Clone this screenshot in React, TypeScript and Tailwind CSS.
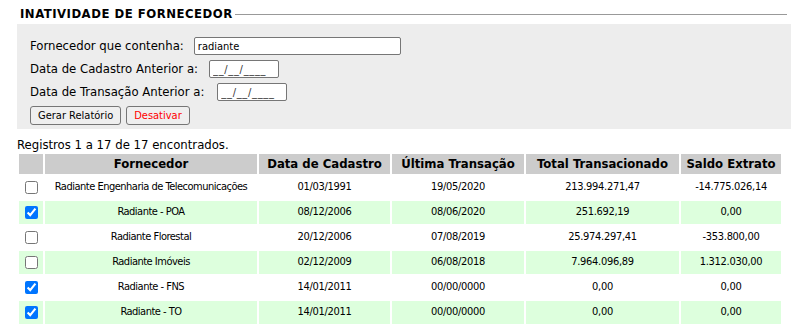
import React from "react";

interface Linha {
  id: number;
  marcado: boolean;
  nome: string;
  cadastro: string;
  ultima: string;
  total: string;
  saldo: string;
}

const linhas: Linha[] = [
  { id: 1, marcado: false, nome: "Radiante Engenharia de Telecomunicações", cadastro: "01/03/1991", ultima: "19/05/2020", total: "213.994.271,47", saldo: "-14.775.026,14" },
  { id: 2, marcado: true, nome: "Radiante - POA", cadastro: "08/12/2006", ultima: "08/06/2020", total: "251.692,19", saldo: "0,00" },
  { id: 3, marcado: false, nome: "Radiante Florestal", cadastro: "20/12/2006", ultima: "07/08/2019", total: "25.974.297,41", saldo: "-353.800,00" },
  { id: 4, marcado: false, nome: "Radiante Imóveis", cadastro: "02/12/2009", ultima: "06/08/2018", total: "7.964.096,89", saldo: "1.312.030,00" },
  { id: 5, marcado: true, nome: "Radiante - FNS", cadastro: "14/01/2011", ultima: "00/00/0000", total: "0,00", saldo: "0,00" },
  { id: 6, marcado: true, nome: "Radiante - TO", cadastro: "14/01/2011", ultima: "00/00/0000", total: "0,00", saldo: "0,00" },
];

const fonte = "font-['DejaVu_Sans_Condensed','DejaVu_Sans',sans-serif]";

const CampoData = () => (
  <input
    type="text"
    defaultValue="__/__/____"
    className="h-[18px] w-[70px] rounded-[2px] border border-[#767676] bg-white px-[3px] text-[11px] tracking-[0.7px] text-[#333] outline-none"
  />
);

export default function App() {
  return (
    <div className={`w-[808px] bg-white px-[17px] pt-[6px] text-black ${fonte}`}>
      {/* titulo */}
      <div className="flex w-[770px] items-center gap-[2px] pl-[3px]">
        <span className="text-[13px] font-bold leading-[16px] tracking-[0.5px]">INATIVIDADE DE FORNECEDOR</span>
        <div className="h-px flex-1 bg-[#999]" />
      </div>

      {/* filtros */}
      <div className="mt-[2px] flex flex-col gap-[5px] bg-[#ededed] pb-[4px] pl-[13px] pt-[13px] text-[13px]">
        <div className="flex h-[18px] items-center gap-[10px]">
          <span>Fornecedor que contenha:</span>
          <input
            type="text"
            defaultValue="radiante"
            className="h-[18px] w-[207px] rounded-[2px] border border-[#767676] bg-white px-[3px] text-[11px] outline-none"
          />
        </div>
        <div className="flex h-[18px] items-center gap-[11px]">
          <span>Data de Cadastro Anterior a:</span>
          <CampoData />
        </div>
        <div className="flex h-[18px] items-center gap-[13px]">
          <span>Data de Transação Anterior a:</span>
          <CampoData />
        </div>
        <div className="flex gap-[5px]">
          <button className="h-[19px] rounded-[3px] border border-[#767676] bg-[#efefef] px-[7px] text-[11px] leading-none">
            Gerar Relatório
          </button>
          <button className="h-[19px] rounded-[3px] border border-[#767676] bg-[#efefef] px-[7px] text-[11px] leading-none text-[#ff0000]">
            Desativar
          </button>
        </div>
      </div>

      <p className="mt-[8px] text-[13px] leading-[15px]">Registros 1 a 17 de 17 encontrados.</p>

      <table className="w-[766px] table-fixed border-separate border-spacing-[2px]">
        <colgroup>
          <col className="w-[24px]" />
          <col className="w-[212px]" />
          <col className="w-[131px]" />
          <col className="w-[132px]" />
          <col className="w-[153px]" />
          <col className="w-[100px]" />
        </colgroup>
        <thead>
          <tr className="h-[20px] bg-[#cccccc] text-[13px] font-bold">
            <th></th>
            <th>Fornecedor</th>
            <th>Data de Cadastro</th>
            <th>Última Transação</th>
            <th>Total Transacionado</th>
            <th>Saldo Extrato</th>
          </tr>
        </thead>
        <tbody>
          {linhas.map((l, i) => (
            <tr
              key={l.id}
              className={`h-[23px] text-center text-[11px] tracking-[-0.3px] ${i % 2 === 1 ? "bg-[#ddffdd]" : "bg-white"}`}
            >
              <td className="p-0">
                <input type="checkbox" defaultChecked={l.marcado} className="m-0 h-[13px] w-[13px] align-middle" />
              </td>
              <td className="tracking-[-0.5px]">{l.nome}</td>
              <td>{l.cadastro}</td>
              <td>{l.ultima}</td>
              <td>{l.total}</td>
              <td>{l.saldo}</td>
            </tr>
          ))}
        </tbody>
      </table>
    </div>
  );
}
